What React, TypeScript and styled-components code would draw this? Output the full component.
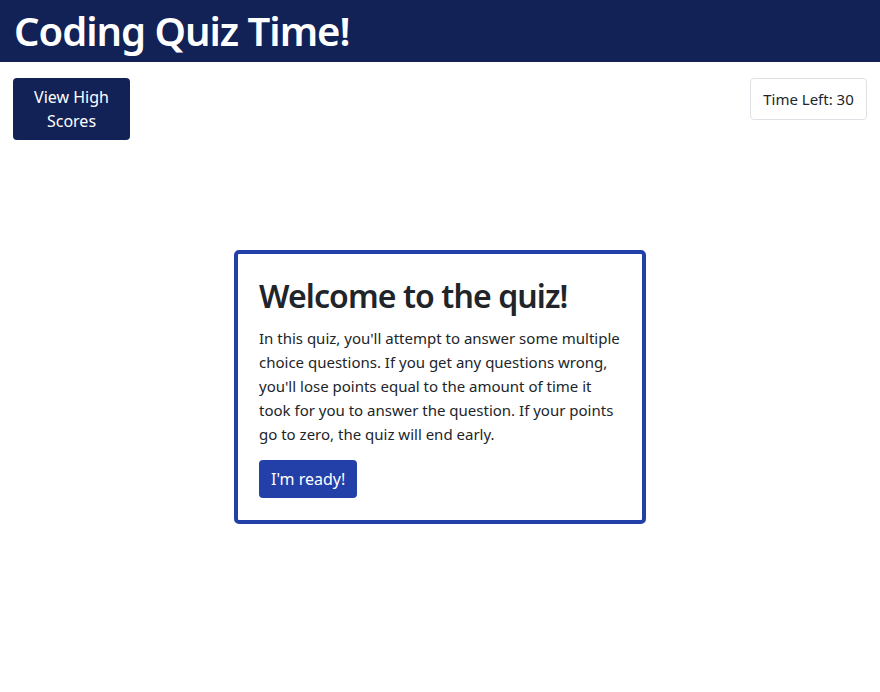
import React from "react";
import styled, { createGlobalStyle } from "styled-components";

const Global = createGlobalStyle`
  html, body { margin: 0; padding: 0; background: #fff; }
  body {
    font-family: "Noto Sans", "Open Sans", "Liberation Sans", sans-serif;
    color: #212529;
    font-size: 16px;
    line-height: 1.5;
  }
  * { box-sizing: border-box; }
`;

const Header = styled.header`
  background: #122257;
  height: 62px;
  display: flex;
  align-items: center;
  padding: 0 14px;
`;

const Title = styled.h1`
  margin: 0;
  color: #fff;
  font-size: 40px;
  font-weight: 600;
  line-height: 1.2;
  letter-spacing: -1px;
`;

const Controls = styled.div`
  display: flex;
  justify-content: space-between;
  align-items: flex-start;
  padding: 16px 13px 0;
`;

const NavButton = styled.button`
  width: 117px;
  height: 62px;
  background: #122257;
  color: #fff;
  border: none;
  border-radius: 4px;
  font-family: inherit;
  font-size: 16px;
  line-height: 24px;
  padding: 6px 12px;
`;

const Timer = styled.div`
  width: 117px;
  height: 42px;
  border: 1px solid #dee2e6;
  border-radius: 4px;
  display: flex;
  align-items: center;
  justify-content: center;
  font-size: 15px;
`;

const Main = styled.main`
  display: flex;
  justify-content: center;
  padding-top: 110px;
`;

const Card = styled.section`
  width: 412px;
  border: 4px solid #2340a8;
  border-radius: 5px;
  padding: 23px 21px 22px;
`;

const Heading = styled.h2`
  margin: 0 0 11px;
  font-size: 32px;
  font-weight: 600;
  line-height: 1.2;
  letter-spacing: -0.9px;
`;

const Text = styled.p`
  margin: 0 0 14px;
  font-size: 15px;
  line-height: 24px;
`;

const PrimaryButton = styled.button`
  display: block;
  background: #2340a8;
  color: #fff;
  border: none;
  border-radius: 4px;
  font-family: inherit;
  font-size: 16px;
  line-height: 24px;
  padding: 0 12px;
  height: 38px;
  min-height: 38px;
`;

export default function App() {
  return (
    <>
      <Global />
      <Header>
        <Title>Coding Quiz Time!</Title>
      </Header>
      <Controls>
        <NavButton>View High Scores</NavButton>
        <Timer>Time Left: 30</Timer>
      </Controls>
      <Main>
        <Card>
          <Heading>Welcome to the quiz!</Heading>
          <Text>
            In this quiz, you'll attempt to answer some multiple choice
            questions. If you get any questions wrong, you'll lose points equal
            to the amount of time it took for you to answer the question. If
            your points go to zero, the quiz will end early.
          </Text>
          <PrimaryButton>I'm ready!</PrimaryButton>
        </Card>
      </Main>
    </>
  );
}
